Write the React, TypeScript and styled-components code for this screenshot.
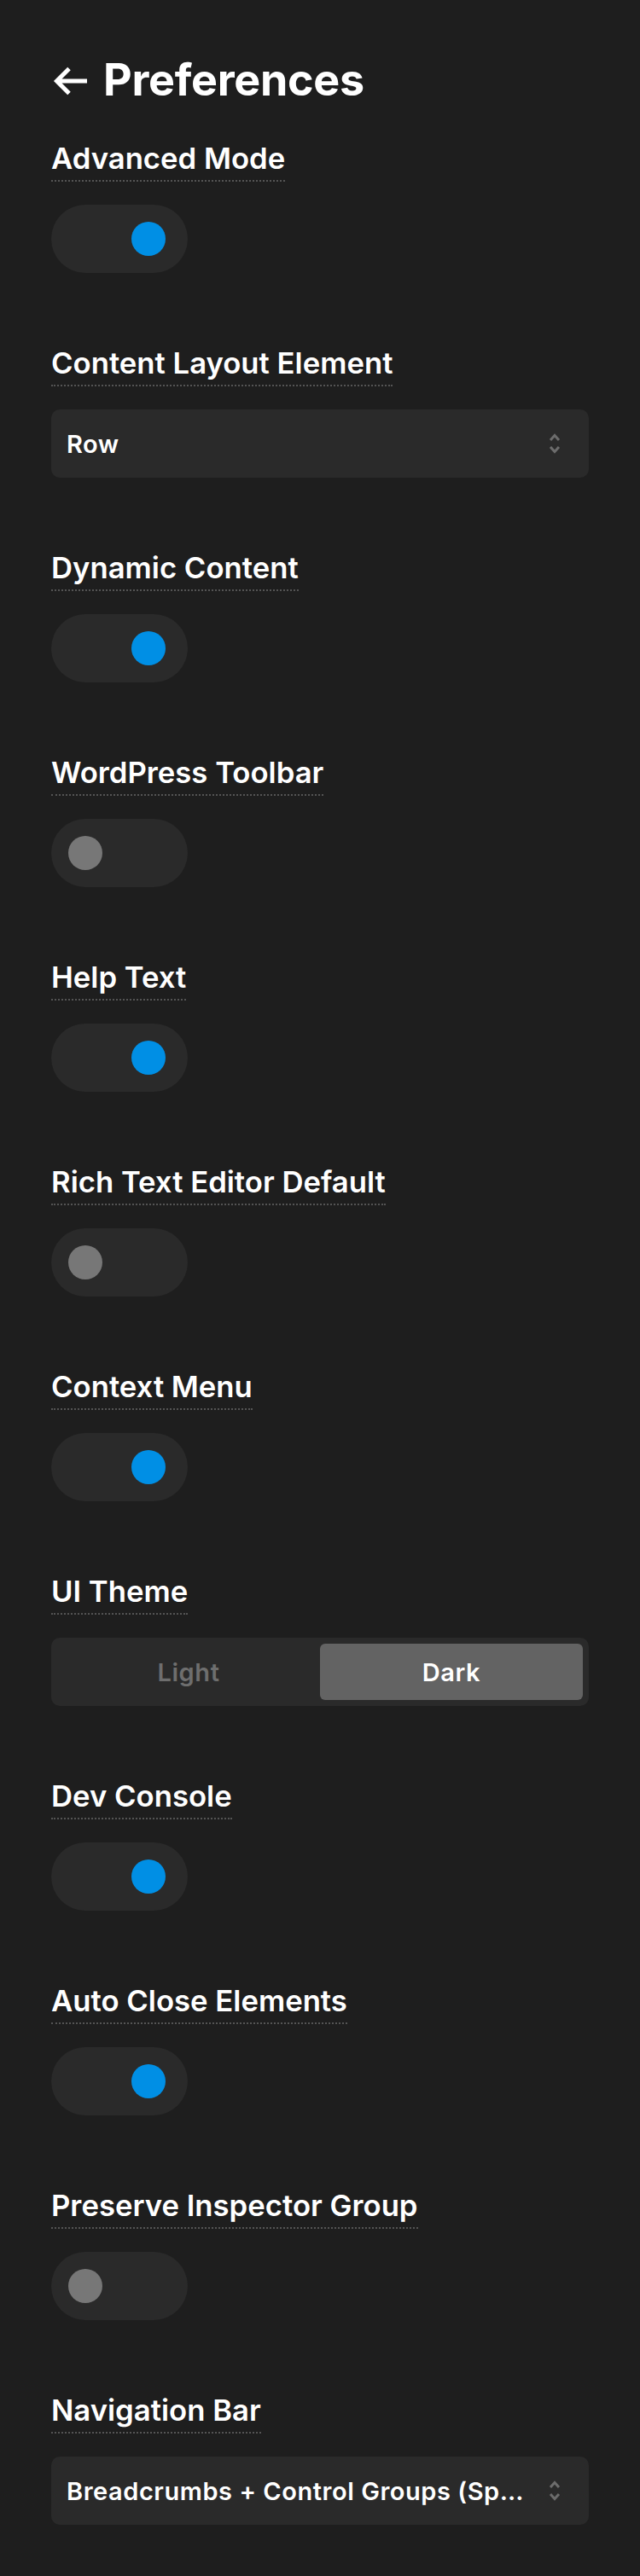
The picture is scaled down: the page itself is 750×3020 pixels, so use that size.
import styled, { createGlobalStyle } from "styled-components";

const GlobalStyle = createGlobalStyle`
  html, body {
    margin: 0;
    padding: 0;
    background: #1e1e1e;
  }
  * {
    box-sizing: border-box;
  }
`;

type Pref =
  | { kind: "toggle"; label: string; on: boolean }
  | { kind: "select"; label: string; value: string }
  | { kind: "segment"; label: string; options: string[]; active: number };

const prefs: Pref[] = [
  { kind: "toggle", label: "Advanced Mode", on: true },
  { kind: "select", label: "Content Layout Element", value: "Row" },
  { kind: "toggle", label: "Dynamic Content", on: true },
  { kind: "toggle", label: "WordPress Toolbar", on: false },
  { kind: "toggle", label: "Help Text", on: true },
  { kind: "toggle", label: "Rich Text Editor Default", on: false },
  { kind: "toggle", label: "Context Menu", on: true },
  { kind: "segment", label: "UI Theme", options: ["Light", "Dark"], active: 1 },
  { kind: "toggle", label: "Dev Console", on: true },
  { kind: "toggle", label: "Auto Close Elements", on: true },
  { kind: "toggle", label: "Preserve Inspector Group", on: false },
  {
    kind: "select",
    label: "Navigation Bar",
    value: "Breadcrumbs + Control Groups (Split)",
  },
];

export default function App(): JSX.Element {
  return (
    <>
      <GlobalStyle />
      <Page>
        <Header>
          <BackButton aria-label="Back">
            <svg width="40" height="36" viewBox="0 0 40 36" fill="none">
              <path
                d="M19 3.5 L4.5 18 L19 32.5 M4.5 18 H40"
                stroke="#ffffff"
                strokeWidth="5"
                strokeLinejoin="miter"
              />
            </svg>
          </BackButton>
          <Title>Preferences</Title>
        </Header>

        <List>
          {prefs.map((pref) => (
            <Section key={pref.label}>
              <Label>{pref.label}</Label>
              {pref.kind === "toggle" && (
                <Toggle $on={pref.on}>
                  <Knob $on={pref.on} />
                </Toggle>
              )}
              {pref.kind === "select" && (
                <Select>
                  <SelectValue title={pref.value}>{pref.value}</SelectValue>
                  <svg width="14" height="28" viewBox="0 0 14 28" fill="none">
                    <path
                      d="M2 10 L7 4.5 L12 10 M2 18 L7 23.5 L12 18"
                      stroke="#6c6c6c"
                      strokeWidth="3"
                    />
                  </svg>
                </Select>
              )}
              {pref.kind === "segment" && (
                <Segmented>
                  {pref.options.map((opt, i) => (
                    <Segment key={opt} $active={i === pref.active}>
                      {opt}
                    </Segment>
                  ))}
                </Segmented>
              )}
            </Section>
          ))}
        </List>
      </Page>
    </>
  );
}

const Page = styled.div`
  min-height: 3020px;
  padding: 64px 60px 60px;
  font-family: Inter, "Noto Sans", sans-serif;
  color: #ffffff;
`;

const Header = styled.div`
  display: flex;
  align-items: center;
  gap: 17px;
  height: 60px;
  margin-bottom: 41px;
`;

const BackButton = styled.div`
  display: flex;
  align-items: center;
  width: 42px;
  height: 36px;
  margin-left: 2px;
  margin-top: 2px;
`;

const Title = styled.h1`
  margin: 0;
  font-size: 52px;
  line-height: 60px;
  font-weight: 700;
  letter-spacing: -0.3px;
`;

const List = styled.div`
  display: flex;
  flex-direction: column;
  gap: 85px;
`;

const Section = styled.div`
  display: flex;
  flex-direction: column;
  gap: 27px;
`;

const Label = styled.div`
  align-self: flex-start;
  font-size: 34.7px;
  line-height: 40px;
  font-weight: 600;
  padding-bottom: 6px;
  border-bottom: 2px dotted #545454;
`;

const Toggle = styled.div<{ $on: boolean }>`
  display: flex;
  align-items: center;
  justify-content: ${(p) => (p.$on ? "flex-end" : "flex-start")};
  width: 160px;
  height: 80px;
  padding: 0 26px 0 20px;
  border-radius: 40px;
  background: #2a2a2a;
`;

const Knob = styled.div<{ $on: boolean }>`
  width: 40px;
  height: 40px;
  border-radius: 50%;
  background: ${(p) => (p.$on ? "#008fe5" : "#777777")};
`;

const Select = styled.div`
  display: flex;
  align-items: center;
  gap: 22px;
  height: 80px;
  padding: 0 33px 0 18px;
  border-radius: 10px;
  background: #2a2a2a;
`;

const SelectValue = styled.div`
  flex: 1;
  min-width: 0;
  font-size: 29px;
  font-weight: 600;
  letter-spacing: 0.55px;
  white-space: nowrap;
  overflow: hidden;
  text-overflow: ellipsis;
`;

const Segmented = styled.div`
  display: grid;
  grid-template-columns: 1fr 1fr;
  height: 80px;
  padding: 7px;
  border-radius: 10px;
  background: #2a2a2a;
`;

const Segment = styled.div<{ $active: boolean }>`
  display: flex;
  align-items: center;
  justify-content: center;
  border-radius: 6px;
  font-size: 29px;
  font-weight: 600;
  letter-spacing: 0.6px;
  color: ${(p) => (p.$active ? "#ffffff" : "#6e6e6e")};
  background: ${(p) => (p.$active ? "#636363" : "transparent")};
`;
